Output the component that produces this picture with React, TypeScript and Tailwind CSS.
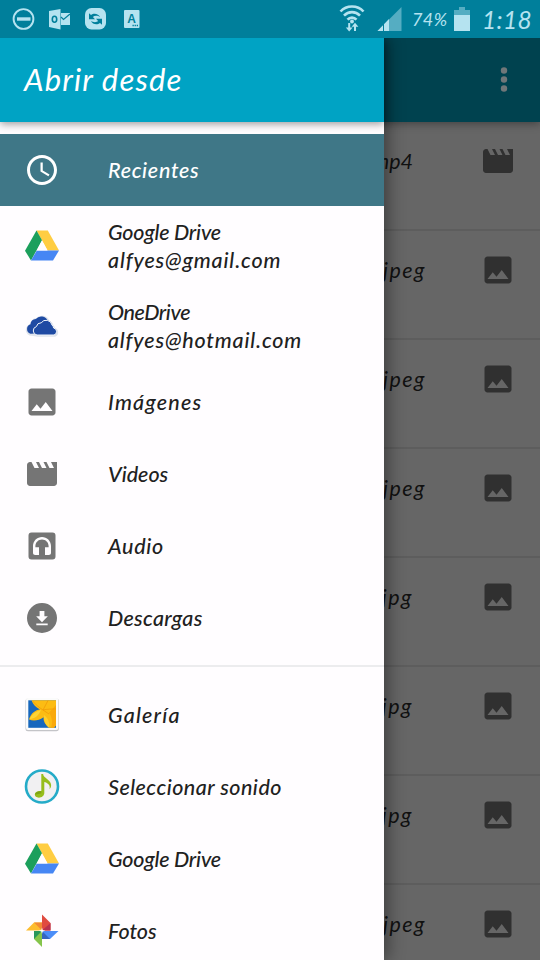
import type { ReactNode } from "react";

const IMAGE =
  "M21 19V5c0-1.1-.9-2-2-2H5c-1.1 0-2 .9-2 2v14c0 1.1.9 2 2 2h14c1.1 0 2-.9 2-2zM8.5 13.5l2.5 3.01L14.5 12l4.5 6H5l3.5-4.5z";
const MOVIE =
  "M18 4l2 4h-3l-2-4h-2l2 4h-3l-2-4H8l2 4H7L5 4H4c-1.1 0-1.99.9-1.99 2L2 18c0 1.1.9 2 2 2h16c1.1 0 2-.9 2-2V4h-4z";
const CLOCK =
  "M11.99 2C6.47 2 2 6.48 2 12s4.47 10 9.99 10C17.52 22 22 17.52 22 12S17.52 2 11.99 2zM12 20c-4.42 0-8-3.58-8-8s3.58-8 8-8 8 3.58 8 8-3.58 8-8 8zm.5-13H11v6l5.25 3.15.75-1.23-4.5-2.67z";
const AUDIO =
  "M5 3h14a2 2 0 0 1 2 2v14a2 2 0 0 1-2 2H5a2 2 0 0 1-2-2V5a2 2 0 0 1 2-2zM12 6c-3.3 0-6 2.6-6 6v4.5c0 .9.6 1.5 1.5 1.5H10v-5.2H7.6V12c0-2.5 2-4.4 4.400-4.400s4.400 1.900 4.400 4.400v.8H14V18h2.500c.9 0 1.500-.6 1.500-1.500V12c0-3.400-2.700-6-6-6z";
const DOWNLOAD =
  "M12 2a10 10 0 1 0 0 20 10 10 0 0 0 0-20zM10.400 7.300h3.200v3.600h2.300L12 14.800 8.100 10.900h2.300zM8.200 15.600h7.600v1.300H8.200z";

function Glyph({ d, className }: { d: string; className: string }) {
  return (
    <svg viewBox="0 0 24 24" className={`size-9 shrink-0 ${className}`} fill="currentColor" fillRule="evenodd">
      <path d={d} />
    </svg>
  );
}

function DriveIcon() {
  return (
    <svg viewBox="0 0 36 36" className="size-9 shrink-0">
      <path d="M12.500 2.500h11.300l11.200 20H23.600z" fill="#ffcd42" />
      <path d="M12.500 2.500l5.500 9.800L7 32.500 1 22.700z" fill="#1c9f5c" />
      <path d="M12.800 22.500H35l-6 10H7z" fill="#4686f4" />
      <path d="M12.800 22.500h10.700L18 12.500z" fill="#fffdff" />
    </svg>
  );
}

function OneDriveIcon() {
  return (
    <svg viewBox="0 0 36 36" className="size-9 shrink-0">
      <g stroke="#dfe3eb" strokeWidth="1.600" fill="#dfe3eb" transform="translate(.8 .4)">
        <path d="M7 26.500a5 5 0 0 1-.5-10A5.200 5.200 0 0 1 11.800 10.500a7 7 0 0 1 12 2.500 6 6 0 0 1 4.200 4.500 4.500 4.500 0 0 1 1.600 3 3.600 3.600 0 0 1 .4 7H13z" />
      </g>
      <path d="M6.500 25.800a5 5 0 0 1 0-9.500A5.200 5.200 0 0 1 11.800 11a7 7 0 0 1 12 2L22 25z" fill="#1f4aa3" />
      <path
        d="M13 27a4.300 4.300 0 0 1-.6-8.400 4.800 4.800 0 0 1 4.800-3.800 6 6 0 0 1 10.800 2.200 4.500 4.500 0 0 1 1.600 3 3.600 3.600 0 0 1 .4 7z"
        fill="#1f4aa3"
        stroke="#f2f5fb"
        strokeWidth="1"
      />
    </svg>
  );
}

function GalleryIcon() {
  return (
    <svg viewBox="0 0 36 36" className="size-9 shrink-0">
      <rect x="1.500" y="1.500" width="33.300" height="32.700" rx="2.500" fill="#c4c4c8" />
      <rect x="2" y="1" width="32.300" height="32" rx="2" fill="#fbfbfb" />
      <rect x="4.300" y="3.300" width="27.700" height="27.500" fill="#1767bd" />
      <path
        d="M7.500 3.300H32v25c-1 1-1.500 1.700-2 2.500h-5c-4-3-5.800-7-5.500-10.500C15 23.500 9.500 24.500 5 22.500c2-6.500 6.500-9.500 11-10C12 10.500 9 7.500 7.500 3.300z"
        fill="#fcbc13"
      />
      <path d="M17 13c-5 1-9 4-11.500 9C11 22 15 18 17 13z" fill="#ffd435" />
      <path d="M20 18c-.5 5 1.500 10 5 12.500 1-5-1-9.500-5-12.500z" fill="#ffcf2c" />
      <path d="M32 8v20.500l-2 2.300h-3c2-5 1-11-2-15z" fill="#f9a90c" />
      <path d="M9 4.500c3 3 6 6 10 8.500 4-1 9-1 13-1M19 13l5-9.500M19 13l6 4" stroke="#f09b07" strokeWidth=".8" fill="none" />
    </svg>
  );
}

function SoundIcon() {
  return (
    <svg viewBox="0 0 36 36" className="size-9 shrink-0">
      <circle cx="18" cy="17.500" r="16" fill="#f1f0f2" stroke="#25abc8" strokeWidth="2.600" />
      <path
        d="M17.300 5h1.800c.2 4 7.600 5.500 8 11 .1 1.800-.6 3.200-1.600 4.200 1.300-4.600-2.500-6.400-5.200-7.200V24c0 2.700-2.600 4.700-5.400 4.700-2.500 0-4.100-1.300-4.100-3.100 0-2.500 2.800-4 6.500-3.500z"
        fill="#96bd1b"
      />
      <path d="M11.200 25.800c0-2.300 2.500-3.700 6.100-3.500v2z" fill="#7da316" />
    </svg>
  );
}

function PhotosIcon() {
  return (
    <svg viewBox="0 0 36 36" className="size-9 shrink-0">
      <path d="M18 1.500l8.500 8.500V17.500H18z" fill="#e04b40" />
      <path d="M18 17.500l8.500-7.500V17.500z" fill="#b9324e" />
      <path d="M34.500 18L26 26h-8v-8z" fill="#4b8df8" />
      <path d="M18 18l8 8h-8z" fill="#3465c0" />
      <path d="M18 34l-8-8v-8h8z" fill="#85c44b" />
      <path d="M18 18l-8 8v-8z" fill="#28975b" />
      <path d="M2 17.500l8-8h8v8z" fill="#fdbd30" />
      <path d="M18 17.500l-8-8h8z" fill="#f28a35" />
      <path d="M18 14.500l.7 2.600 2.600.6-2.600.7-.7 2.600-.7-2.600-2.600-.7 2.600-.6z" fill="#fff" />
    </svg>
  );
}

function StatusBar() {
  return (
    <header className="relative z-20 flex h-[38px] shrink-0 items-center bg-[#007f9b] pl-3 pr-[9px] text-[#b5e3f0]">
      <svg viewBox="0 0 24 24" className="size-6" fill="none" stroke="currentColor">
        <circle cx="11.500" cy="12" r="9.900" strokeWidth="1.900" />
        <path d="M5 12h13.500" strokeWidth="3.400" />
      </svg>
      <svg viewBox="0 0 24 24" className="ml-3 size-6">
        <path d="M1 4l11.500-2v20.500L1 20z" fill="currentColor" />
        <ellipse cx="6.500" cy="12.200" rx="2.200" ry="3" fill="none" stroke="#007f9b" strokeWidth="1.600" />
        <path d="M13 6h9v12h-9z" fill="currentColor" />
        <path d="M13 10l2.500 2.500L22 7" fill="none" stroke="#007f9b" strokeWidth="1.200" />
      </svg>
      <svg viewBox="0 0 24 24" className="ml-3 size-6">
        <rect x="1" y="1" width="21" height="21.500" rx="6.500" fill="currentColor" />
        <path d="M5 6.200v6h6L8.900 10c1.600-1.600 5-1.500 7.300.3C14.600 6.700 9.800 5.600 7 8.100z" fill="#007f9b" />
        <path d="M18 17.800v-6h-6l2.100 2.200c-1.600 1.600-5 1.500-7.300-.3 1.600 3.600 6.400 4.700 9.200 2.200z" fill="#007f9b" />
      </svg>
      <svg viewBox="0 0 24 24" className="ml-3 size-6">
        <rect x="4" y="3" width="15.500" height="18" rx="1" fill="currentColor" />
        <text x="11.500" y="16" textAnchor="middle" fontSize="12" className="font-['Liberation_Sans'] font-bold" fill="#007f9b">
          A
        </text>
        <path d="M12.500 18.500h5.500" stroke="#007f9b" strokeWidth="1.300" strokeDasharray="1.300 .8" />
      </svg>
      <div className="grow" />
      <svg viewBox="0 0 26 28" className="mr-3 h-7 w-[26px]" fill="none" stroke="currentColor" strokeWidth="2.600">
        <path d="M1.500 6.500C7.500-.2 18.500-.2 24.500 6.500M5 10.700c4.500-4.800 11.500-4.800 16 0M8.500 14.700c2.500-2.800 6.500-2.800 9 0" />
        <circle cx="13" cy="16.500" r="1.900" fill="currentColor" stroke="none" />
        <path d="M10.200 18v6M16 20v6" strokeWidth="2" />
        <path d="M6.800 22.500h6.800l-3.400 4zM12.600 21.800h6.800l-3.400-4z" fill="currentColor" stroke="none" />
      </svg>
      <svg viewBox="0 0 25 24" className="mr-2.5 h-6 w-[25px]">
        <path d="M24.500 0v24H.5z" fill="#55adc2" />
        <path d="M12 12v12H.5z" fill="currentColor" />
        <path d="M6.500 15v9" stroke="#007f9b" strokeWidth="1" />
      </svg>
      <span className="w-[41px] whitespace-nowrap text-[18px] italic tracking-[0.4px]">74%</span>
      <svg viewBox="0 0 18 24" className="h-6 w-[18px]">
        <path d="M6 0h6v3h5v21H1V3h5z" fill="#55adc2" />
        <path d="M1 8h16v16H1z" fill="currentColor" />
      </svg>
      <span className="ml-[11px] mt-0.5 w-[49px] whitespace-nowrap text-[24.500px] italic leading-none tracking-[0.3px]">1:18</span>
    </header>
  );
}

const files: { name: string; icon: string; style: string }[] = [
  { name: "mp4", icon: MOVIE, style: "pr-[67px]" },
  { name: "jpeg", icon: IMAGE, style: "pr-[54px] tracking-[1.5px]" },
  { name: "jpeg", icon: IMAGE, style: "pr-[54px] tracking-[1.5px]" },
  { name: "jpeg", icon: IMAGE, style: "pr-[54px] tracking-[1.5px]" },
  { name: "jpg", icon: IMAGE, style: "pr-[67px] tracking-[1.5px]" },
  { name: "jpg", icon: IMAGE, style: "pr-[67px] tracking-[1.5px]" },
  { name: "jpg", icon: IMAGE, style: "pr-[67px] tracking-[1.5px]" },
  { name: "jpeg", icon: IMAGE, style: "pr-[54px] tracking-[1.5px]" },
];

function Row({ icon, children, tall, selected }: { icon: ReactNode; children: ReactNode; tall?: boolean; selected?: boolean }) {
  return (
    <li
      className={`flex shrink-0 items-center gap-12 pl-6 text-[21.5px] font-medium italic leading-7 ${tall ? "h-20" : "h-[72px]"} ${
        selected ? "bg-[#3f7787] text-white" : "text-[#212121]"
      }`}
    >
      {icon}
      <div className="flex flex-col whitespace-nowrap pb-px">{children}</div>
    </li>
  );
}

export default function App() {
  const grey = "text-[#757575]";
  return (
    <div className="relative flex h-[960px] w-[540px] flex-col overflow-hidden bg-[#666] font-['Lato','Noto_Sans',sans-serif]">
      <StatusBar />
      <div className="z-[1] flex h-[84px] shrink-0 items-center justify-end bg-[#00424f] pr-[31px] shadow-[0_2px_8px_rgba(0,0,0,0.35)]">
        <svg viewBox="0 0 10 28" className="h-7 w-2.5 fill-[#707779]">
          <circle cx="5" cy="4.500" r="3.200" />
          <circle cx="5" cy="13.500" r="3.200" />
          <circle cx="5" cy="22.500" r="3.200" />
        </svg>
      </div>
      <ul className="flex flex-col">
        {files.map((f, i) => (
          <li key={i} className="flex h-[109px] shrink-0 items-start justify-end border-b-2 border-[#5d5d5d] pr-6 pt-[21px]">
            <span className={`text-[21.5px] italic leading-9 text-[#111] ${f.style}`}>{f.name}</span>
            <Glyph d={f.icon} className="text-[#303030]" />
          </li>
        ))}
      </ul>

      <aside className="absolute bottom-0 left-0 top-[38px] z-10 flex w-[384px] flex-col bg-[#fffdff] shadow-[4px_0_16px_rgba(0,0,0,0.4)]">
        <div className="z-[1] flex h-[84px] shrink-0 items-center bg-[#00a3c4] pl-6 shadow-[0_2px_8px_rgba(0,0,0,0.4)]">
          <h1 className="whitespace-nowrap pb-0.5 text-[31px] italic leading-none tracking-[1.15px] text-white">Abrir desde</h1>
        </div>
        <ul className="flex flex-col pt-3">
          <Row selected icon={<Glyph d={CLOCK} className="text-white" />}>
            <span className="tracking-[0.7px]">Recientes</span>
          </Row>
          <Row tall icon={<DriveIcon />}>
            <span className="tracking-[-0.2px]">Google Drive</span>
            <span className="tracking-[0.85px]">alfyes@gmail.com</span>
          </Row>
          <Row tall icon={<OneDriveIcon />}>
            <span className="tracking-[-0.4px]">OneDrive</span>
            <span className="tracking-[0.82px]">alfyes@hotmail.com</span>
          </Row>
          <Row icon={<Glyph d={IMAGE} className={grey} />}>
            <span className="tracking-[1.2px]">Imágenes</span>
          </Row>
          <Row icon={<Glyph d={MOVIE} className={grey} />}>
            <span>Videos</span>
          </Row>
          <Row icon={<Glyph d={AUDIO} className={grey} />}>
            <span className="tracking-[0.7px]">Audio</span>
          </Row>
          <Row icon={<Glyph d={DOWNLOAD} className={grey} />}>
            <span className="tracking-[0.3px]">Descargas</span>
          </Row>
        </ul>
        <hr className="mb-3 mt-[11px] shrink-0 border-t-2 border-[#ececee]" />
        <ul className="flex flex-col">
          <Row icon={<GalleryIcon />}>
            <span className="tracking-[1.2px]">Galería</span>
          </Row>
          <Row icon={<SoundIcon />}>
            <span className="tracking-[0.48px]">Seleccionar sonido</span>
          </Row>
          <Row icon={<DriveIcon />}>
            <span className="tracking-[-0.2px]">Google Drive</span>
          </Row>
          <Row icon={<PhotosIcon />}>
            <span>Fotos</span>
          </Row>
        </ul>
      </aside>
    </div>
  );
}
